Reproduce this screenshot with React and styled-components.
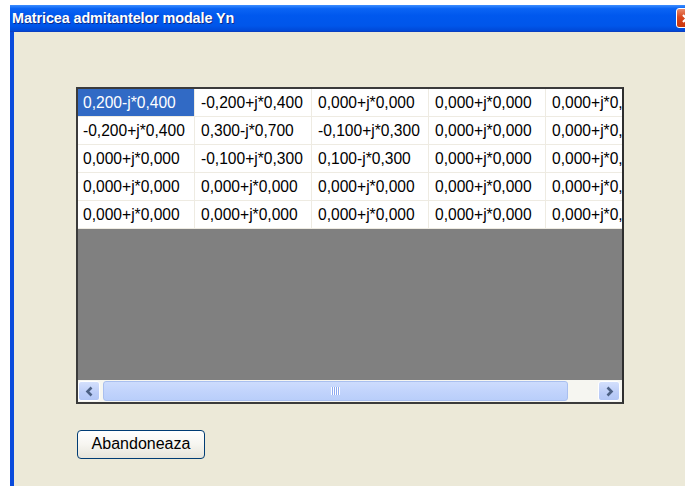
import React from "react";
import styled, { createGlobalStyle } from "styled-components";

const Global = createGlobalStyle`
  html, body {
    margin: 0;
    padding: 0;
    background: #ffffff;
    overflow: hidden;
  }
  body {
    font-family: "Liberation Sans", Arial, sans-serif;
  }
`;

const Window = styled.div`
  margin: 5px 0 0 10px;
  width: 690px;
  height: 481px;
  display: flex;
  flex-direction: column;
`;

const TitleBar = styled.div`
  height: 26px;
  flex: none;
  display: flex;
  align-items: center;
  justify-content: space-between;
  padding: 0 0 0 2px;
  background: linear-gradient(
    to bottom,
    #3d8eff 0%,
    #0a64f4 14%,
    #0058ee 40%,
    #0056ea 80%,
    #0048d6 100%
  );
  border-bottom: 1px solid #0a3fc2;
`;

const Title = styled.span`
  color: #ffffff;
  font-family: "Liberation Sans", Arial, sans-serif;
  font-weight: bold;
  font-size: 14.4px;
  letter-spacing: -0.1px;
  text-shadow: 1px 1px 0 #0d2c8a;
  white-space: nowrap;
`;

const CloseButton = styled.div`
  width: 21px;
  height: 20px;
  margin-right: 3px;
  box-sizing: border-box;
  border: 1px solid #ffffff;
  border-radius: 3px;
  background: linear-gradient(to bottom, #e98a6a 0%, #d9471e 45%, #c9360f 100%);
  display: flex;
  align-items: center;
  justify-content: center;
`;

const Body = styled.div`
  flex: 1;
  background: #ece9d8;
  border-left: 4px solid #0a4bdc;
  padding: 55px 0 0 62px;
  display: flex;
  flex-direction: column;
  align-items: flex-start;
`;

const GridFrame = styled.div`
  width: 548px;
  height: 317px;
  box-sizing: border-box;
  border: 2px solid #3b3b3b;
  border-right-color: #2e2e2e;
  background: #808080;
  display: flex;
  flex-direction: column;
`;

const Viewport = styled.div`
  flex: 1;
  overflow: hidden;
`;

const Table = styled.table`
  border-collapse: separate;
  border-spacing: 0;
  table-layout: fixed;
  width: 585px;
`;

const Cell = styled.td`
  width: 117px;
  height: 28px;
  padding: 0 0 0 ${(p) => (p.$first ? 5 : 6)}px;
  box-sizing: border-box;
  border-right: 1px solid #eeebe2;
  border-bottom: 1px solid #eeebe2;
  background: ${(p) => (p.$selected ? "#316ac5" : "#ffffff")};
  color: ${(p) => (p.$selected ? "#ffffff" : "#000000")};
  font-family: "Liberation Sans", Arial, sans-serif;
  font-size: 15.6px;
  white-space: nowrap;
  overflow: hidden;
  vertical-align: middle;
`;

const ScrollBar = styled.div`
  height: 22px;
  flex: none;
  background: #f6f6f1;
  display: flex;
  align-items: stretch;
  padding: 1px 2px 1px 0;
  box-sizing: border-box;
  gap: 3px;
`;

const ArrowButton = styled.div`
  width: 22px;
  flex: none;
  box-sizing: border-box;
  border: 1px solid #ffffff;
  border-radius: 3px;
  background: linear-gradient(to bottom, #d4e0fc 0%, #bccdf8 60%, #b2c6f6 100%);
  display: flex;
  align-items: center;
  justify-content: center;
`;

const Thumb = styled.div`
  width: 465px;
  flex: none;
  box-sizing: border-box;
  border: 1px solid #a9bfef;
  border-radius: 3px;
  background: linear-gradient(to bottom, #cddcfd 0%, #c2d4fc 50%, #b9cefa 100%);
  display: flex;
  align-items: center;
  justify-content: center;
`;

const Track = styled.div`
  flex: 1;
`;

const Grip = styled.div`
  width: 9px;
  height: 8px;
  background: repeating-linear-gradient(
    to right,
    #ffffff 0px,
    #ffffff 1px,
    #8eaaf0 1px,
    #8eaaf0 2px
  );
`;

const Button = styled.button`
  margin: 26px 0 0 1px;
  width: 128px;
  height: 29px;
  box-sizing: border-box;
  border: 1px solid #003c74;
  border-radius: 4px;
  background: linear-gradient(to bottom, #ffffff 0%, #f6f5f0 50%, #e6e4da 100%);
  font-family: "Liberation Sans", Arial, sans-serif;
  font-size: 16px;
  color: #000000;
  padding: 0 0 1px 0;
`;

const rows = [
  ["0,200-j*0,400", "-0,200+j*0,400", "0,000+j*0,000", "0,000+j*0,000", "0,000+j*0,000"],
  ["-0,200+j*0,400", "0,300-j*0,700", "-0,100+j*0,300", "0,000+j*0,000", "0,000+j*0,000"],
  ["0,000+j*0,000", "-0,100+j*0,300", "0,100-j*0,300", "0,000+j*0,000", "0,000+j*0,000"],
  ["0,000+j*0,000", "0,000+j*0,000", "0,000+j*0,000", "0,000+j*0,000", "0,000+j*0,000"],
  ["0,000+j*0,000", "0,000+j*0,000", "0,000+j*0,000", "0,000+j*0,000", "0,000+j*0,000"],
];

const Chevron = ({ dir }) => (
  <svg width="9" height="11" viewBox="0 0 9 11">
    <path
      d={dir === "left" ? "M6.5 1.5 L2.5 5.5 L6.5 9.5" : "M2.5 1.5 L6.5 5.5 L2.5 9.5"}
      fill="none"
      stroke="#4d6185"
      strokeWidth="2.6"
    />
  </svg>
);

export default function App() {
  return (
    <>
      <Global />
      <Window>
        <TitleBar>
          <Title>Matricea admitantelor modale Yn</Title>
          <CloseButton>
            <svg width="11" height="11" viewBox="0 0 11 11">
              <path d="M2 2 L9 9 M9 2 L2 9" stroke="#ffffff" strokeWidth="2.2" />
            </svg>
          </CloseButton>
        </TitleBar>
        <Body>
          <GridFrame>
            <Viewport>
              <Table>
                <tbody>
                  {rows.map((row, r) => (
                    <tr key={r}>
                      {row.map((v, c) => (
                        <Cell key={c} $first={c === 0} $selected={r === 0 && c === 0}>
                          {v}
                        </Cell>
                      ))}
                    </tr>
                  ))}
                </tbody>
              </Table>
            </Viewport>
            <ScrollBar>
              <ArrowButton>
                <Chevron dir="left" />
              </ArrowButton>
              <Thumb>
                <Grip />
              </Thumb>
              <Track />
              <ArrowButton>
                <Chevron dir="right" />
              </ArrowButton>
            </ScrollBar>
          </GridFrame>
          <Button>Abandoneaza</Button>
        </Body>
      </Window>
    </>
  );
}
